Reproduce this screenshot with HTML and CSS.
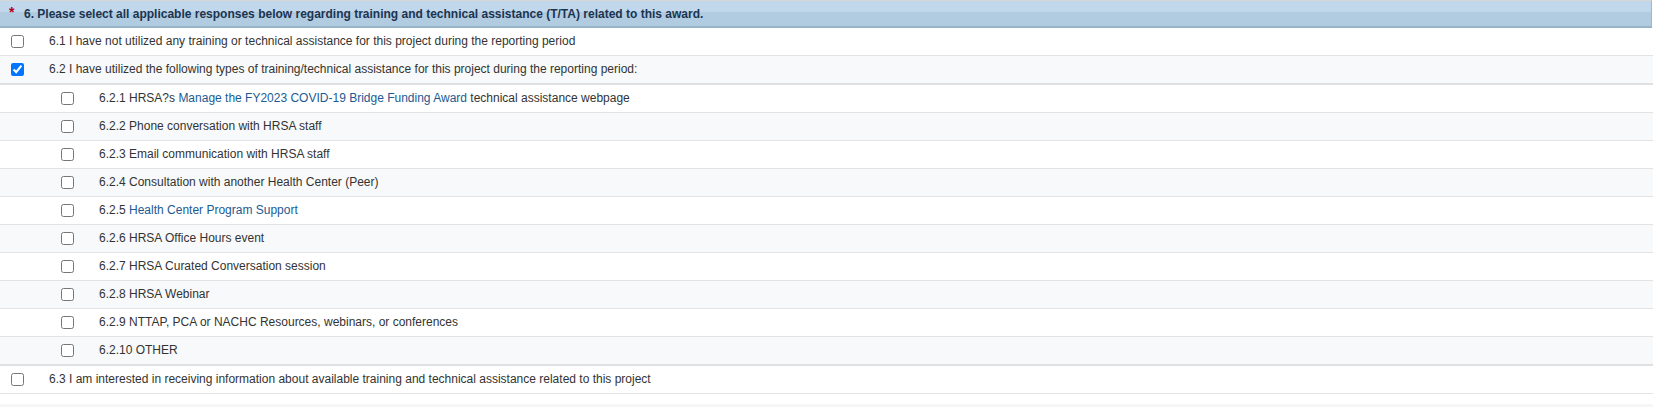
FILE: index.html
```html
<!DOCTYPE html>
<html>
<head>
<meta charset="utf-8">
<link rel="stylesheet" href="styles.css">
</head>
<body>
<div class="question">
  <div class="q-header"><span class="req">*</span><span class="q-title">6. Please select all applicable responses below regarding training and technical assistance (T/TA) related to this award.</span></div>
  <div class="row"><input type="checkbox" class="cb"><span class="label">6.1 I have not utilized any training or technical assistance for this project during the reporting period</span></div>
  <div class="row alt thick"><input type="checkbox" class="cb" checked><span class="label">6.2 I have utilized the following types of training/technical assistance for this project during the reporting period:</span></div>
  <div class="sub">
    <div class="row"><input type="checkbox" class="cb"><span class="label">6.2.1 HRSA?s <a href="#">Manage the FY2023 COVID-19 Bridge Funding Award</a> technical assistance webpage</span></div>
    <div class="row alt"><input type="checkbox" class="cb"><span class="label">6.2.2 Phone conversation with HRSA staff</span></div>
    <div class="row"><input type="checkbox" class="cb"><span class="label">6.2.3 Email communication with HRSA staff</span></div>
    <div class="row alt"><input type="checkbox" class="cb"><span class="label">6.2.4 Consultation with another Health Center (Peer)</span></div>
    <div class="row"><input type="checkbox" class="cb"><span class="label">6.2.5 <a href="#">Health Center Program Support</a></span></div>
    <div class="row alt"><input type="checkbox" class="cb"><span class="label">6.2.6 HRSA Office Hours event</span></div>
    <div class="row"><input type="checkbox" class="cb"><span class="label">6.2.7 HRSA Curated Conversation session</span></div>
    <div class="row alt"><input type="checkbox" class="cb"><span class="label">6.2.8 HRSA Webinar</span></div>
    <div class="row"><input type="checkbox" class="cb"><span class="label">6.2.9 NTTAP, PCA or NACHC Resources, webinars, or conferences</span></div>
    <div class="row alt thick"><input type="checkbox" class="cb"><span class="label">6.2.10 OTHER</span></div>
  </div>
  <div class="row"><input type="checkbox" class="cb"><span class="label">6.3 I am interested in receiving information about available training and technical assistance related to this project</span></div>
  <div class="after"></div>
</div>
</body>
</html>
```
FILE: styles.css
```css
html, body {
  margin: 0;
  padding: 0;
  background: #ffffff;
}
body {
  font-family: "Liberation Sans", Arial, sans-serif;
  font-size: 12px;
  color: #333333;
}
.question {
  width: 1653px;
}
.q-header {
  height: 25px;
  margin-right: 1px;
  border-top: 1px solid #d6d6d6;
  border-bottom: 2px solid #95b3c9;
  border-right: 1px solid #9fb7c9;
  background: linear-gradient(to bottom, #c1d8ec 0, #c1d8ec 44%, #b1cce0 44%, #b1cce0 100%);
  display: flex;
  align-items: center;
}
.req {
  color: #b0001e;
  font-weight: bold;
  font-size: 14px;
  margin-left: 9px;
  width: 15px;
  align-self: flex-start;
  margin-top: 4px;
  line-height: 14px;
}
.q-title {
  font-weight: bold;
  color: #1c3450;
  font-size: 12px;
}
.row {
  height: 27px;
  display: flex;
  align-items: center;
  border-bottom: 1px solid #e3e3e3;
  background: #ffffff;
}
.row.alt {
  background: #f8f9fa;
}
.row.thick {
  border-bottom: 2px solid #dfe0e2;
}
.cb {
  width: 13px;
  height: 13px;
  margin: 0 0 0 11px;
  flex: none;
}
.label {
  margin-left: 25px;
  margin-bottom: 2px;
}
.sub .cb {
  margin-left: 61px;
}
.label a {
  color: #1b5a92;
  text-decoration: none;
}
.after {
  height: 10px;
  background: #ffffff;
}
.question::after {
  content: "";
  display: block;
  height: 4px;
  background: #f6f6f6;
}
```
